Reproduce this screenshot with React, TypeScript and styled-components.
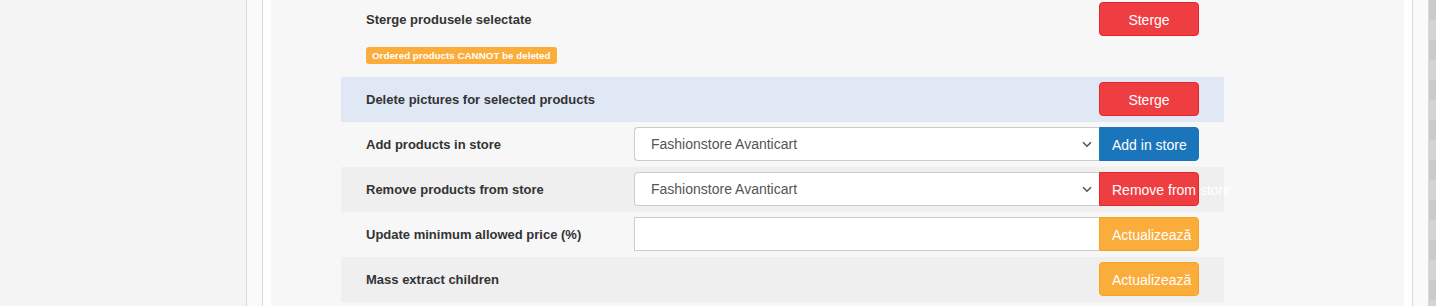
import React from 'react';
import styled, { createGlobalStyle } from 'styled-components';

const GlobalStyle = createGlobalStyle`
  html, body {
    margin: 0;
    padding: 0;
    background: #f4f4f4;
  }
  body {
    font-family: 'Liberation Sans', Arial, Helvetica, sans-serif;
    color: #333;
  }
`;

const Page = styled.div`
  display: flex;
  height: 306px;
  overflow: hidden;
`;

const Sidebar = styled.div`
  width: 246px;
  flex-shrink: 0;
  background: #f4f4f4;
`;

const Rail = styled.div`
  width: 15px;
  flex-shrink: 0;
  background: #fafafa;
  border-left: 1px solid #d9d9d9;
  border-right: 1px solid #d9d9d9;
`;

const Gutter = styled.div`
  width: 8px;
  flex-shrink: 0;
  background: #fff;
`;

const Scrollbar = styled.div`
  width: 7px;
  flex-shrink: 0;
  background: repeating-linear-gradient(
    to bottom,
    #cbcbcb 0,
    #cbcbcb 20px,
    #d4d4d4 20px,
    #d4d4d4 40px
  );
`;

const Panel = styled.div`
  flex: 1;
  background: #f7f7f7;
  padding-left: 70px;
`;

const Table = styled.div`
  width: 883px;
  display: flex;
  flex-direction: column;
`;

type Tone = 'plain' | 'striped' | 'active';

const rowBg: Record<Tone, string> = {
  plain: '#f7f7f7',
  striped: '#efefef',
  active: '#e0e7f5',
};

const Row = styled.div<{ $tone: Tone }>`
  display: flex;
  align-items: center;
  height: 45px;
  box-sizing: border-box;
  padding: 5px 25px 6px;
  background: ${({ $tone }) => rowBg[$tone]};
`;

const TopRow = styled.div`
  display: flex;
  align-items: flex-start;
  height: 77px;
  box-sizing: border-box;
  padding: 2px 25px 0;
  background: #f7f7f7;
`;

const LabelCell = styled.div`
  width: 268px;
  flex-shrink: 0;
  display: flex;
  flex-direction: column;
  align-items: flex-start;
`;

const Label = styled.div`
  font-size: 13px;
  font-weight: bold;
  color: #333;
  line-height: 33px;
  padding-top: 1px;
  white-space: nowrap;
`;

const Badge = styled.span`
  margin-top: 11px;
  display: inline-block;
  background: #fbad3b;
  color: #fff;
  font-size: 9.8px;
  font-weight: bold;
  line-height: 17px;
  padding: 0 6px;
  border-radius: 3px;
  white-space: nowrap;
`;

const Field = styled.div`
  flex: 1;
  height: 34px;
  position: relative;
`;

const Spacer = styled.div`
  flex: 1;
`;

const Select = styled.select`
  appearance: none;
  -webkit-appearance: none;
  width: 100%;
  height: 34px;
  box-sizing: border-box;
  margin: 0;
  padding: 0 30px 0 16px;
  border: 1px solid #ccc;
  border-right: none;
  border-radius: 4px 0 0 4px;
  background: #fff;
  color: #555;
  font-family: 'Liberation Sans', Arial, sans-serif;
  font-size: 14px;
  outline: none;
`;

const Chevron = styled.svg`
  position: absolute;
  right: 7px;
  top: 14px;
  pointer-events: none;
`;

const TextInput = styled.input`
  width: 100%;
  height: 34px;
  box-sizing: border-box;
  margin: 0;
  padding: 0 12px;
  border: 1px solid #ccc;
  border-right: none;
  border-radius: 0;
  background: #fff;
  font-size: 14px;
  outline: none;
`;

type Variant = 'danger' | 'primary' | 'warning';

const btnColors: Record<Variant, { bg: string; border: string }> = {
  danger: { bg: '#ef3e42', border: '#e2262b' },
  primary: { bg: '#1b75bb', border: '#1b75bb' },
  warning: { bg: '#fbad3b', border: '#f8a31f' },
};

const Button = styled.button<{ $variant: Variant; $attached?: boolean }>`
  width: 100px;
  height: 34px;
  flex-shrink: 0;
  box-sizing: border-box;
  margin: 0;
  padding: 1px 12px 0;
  background: ${({ $variant }) => btnColors[$variant].bg};
  border: 1px solid ${({ $variant }) => btnColors[$variant].border};
  border-radius: ${({ $attached }) => ($attached ? '0 4px 4px 0' : '4px')};
  color: #fff;
  font-family: 'Liberation Sans', Arial, sans-serif;
  font-size: 14px;
  text-align: center;
  white-space: nowrap;
  overflow: visible;
  cursor: pointer;
`;

const StoreSelect: React.FC = () => (
  <Field>
    <Select defaultValue="fa">
      <option value="fa">Fashionstore Avanticart</option>
    </Select>
    <Chevron width="10" height="7" viewBox="0 0 10 7">
      <path d="M1 1.2 L5 5.2 L9 1.2" fill="none" stroke="#555" strokeWidth="1.6" />
    </Chevron>
  </Field>
);

const App: React.FC = () => {
  return (
    <>
      <GlobalStyle />
      <Page>
        <Sidebar />
        <Rail />
        <Gutter />
        <Panel>
          <Table>
            <TopRow>
              <LabelCell>
                <Label>Sterge produsele selectate</Label>
                <Badge>Ordered products CANNOT be deleted</Badge>
              </LabelCell>
              <Spacer />
              <Button $variant="danger">Sterge</Button>
            </TopRow>
            <Row $tone="active">
              <LabelCell>
                <Label>Delete pictures for selected products</Label>
              </LabelCell>
              <Spacer />
              <Button $variant="danger">Sterge</Button>
            </Row>
            <Row $tone="plain">
              <LabelCell>
                <Label>Add products in store</Label>
              </LabelCell>
              <StoreSelect />
              <Button $variant="primary" $attached>Add in store</Button>
            </Row>
            <Row $tone="striped">
              <LabelCell>
                <Label>Remove products from store</Label>
              </LabelCell>
              <StoreSelect />
              <Button $variant="danger" $attached>Remove from store</Button>
            </Row>
            <Row $tone="plain">
              <LabelCell>
                <Label>Update minimum allowed price (%)</Label>
              </LabelCell>
              <Field>
                <TextInput type="text" />
              </Field>
              <Button $variant="warning" $attached>Actualizează</Button>
            </Row>
            <Row $tone="striped">
              <LabelCell>
                <Label>Mass extract children</Label>
              </LabelCell>
              <Spacer />
              <Button $variant="warning">Actualizează</Button>
            </Row>
          </Table>
        </Panel>
        <Gutter />
        <Rail />
        <Scrollbar />
      </Page>
    </>
  );
};

export default App;
